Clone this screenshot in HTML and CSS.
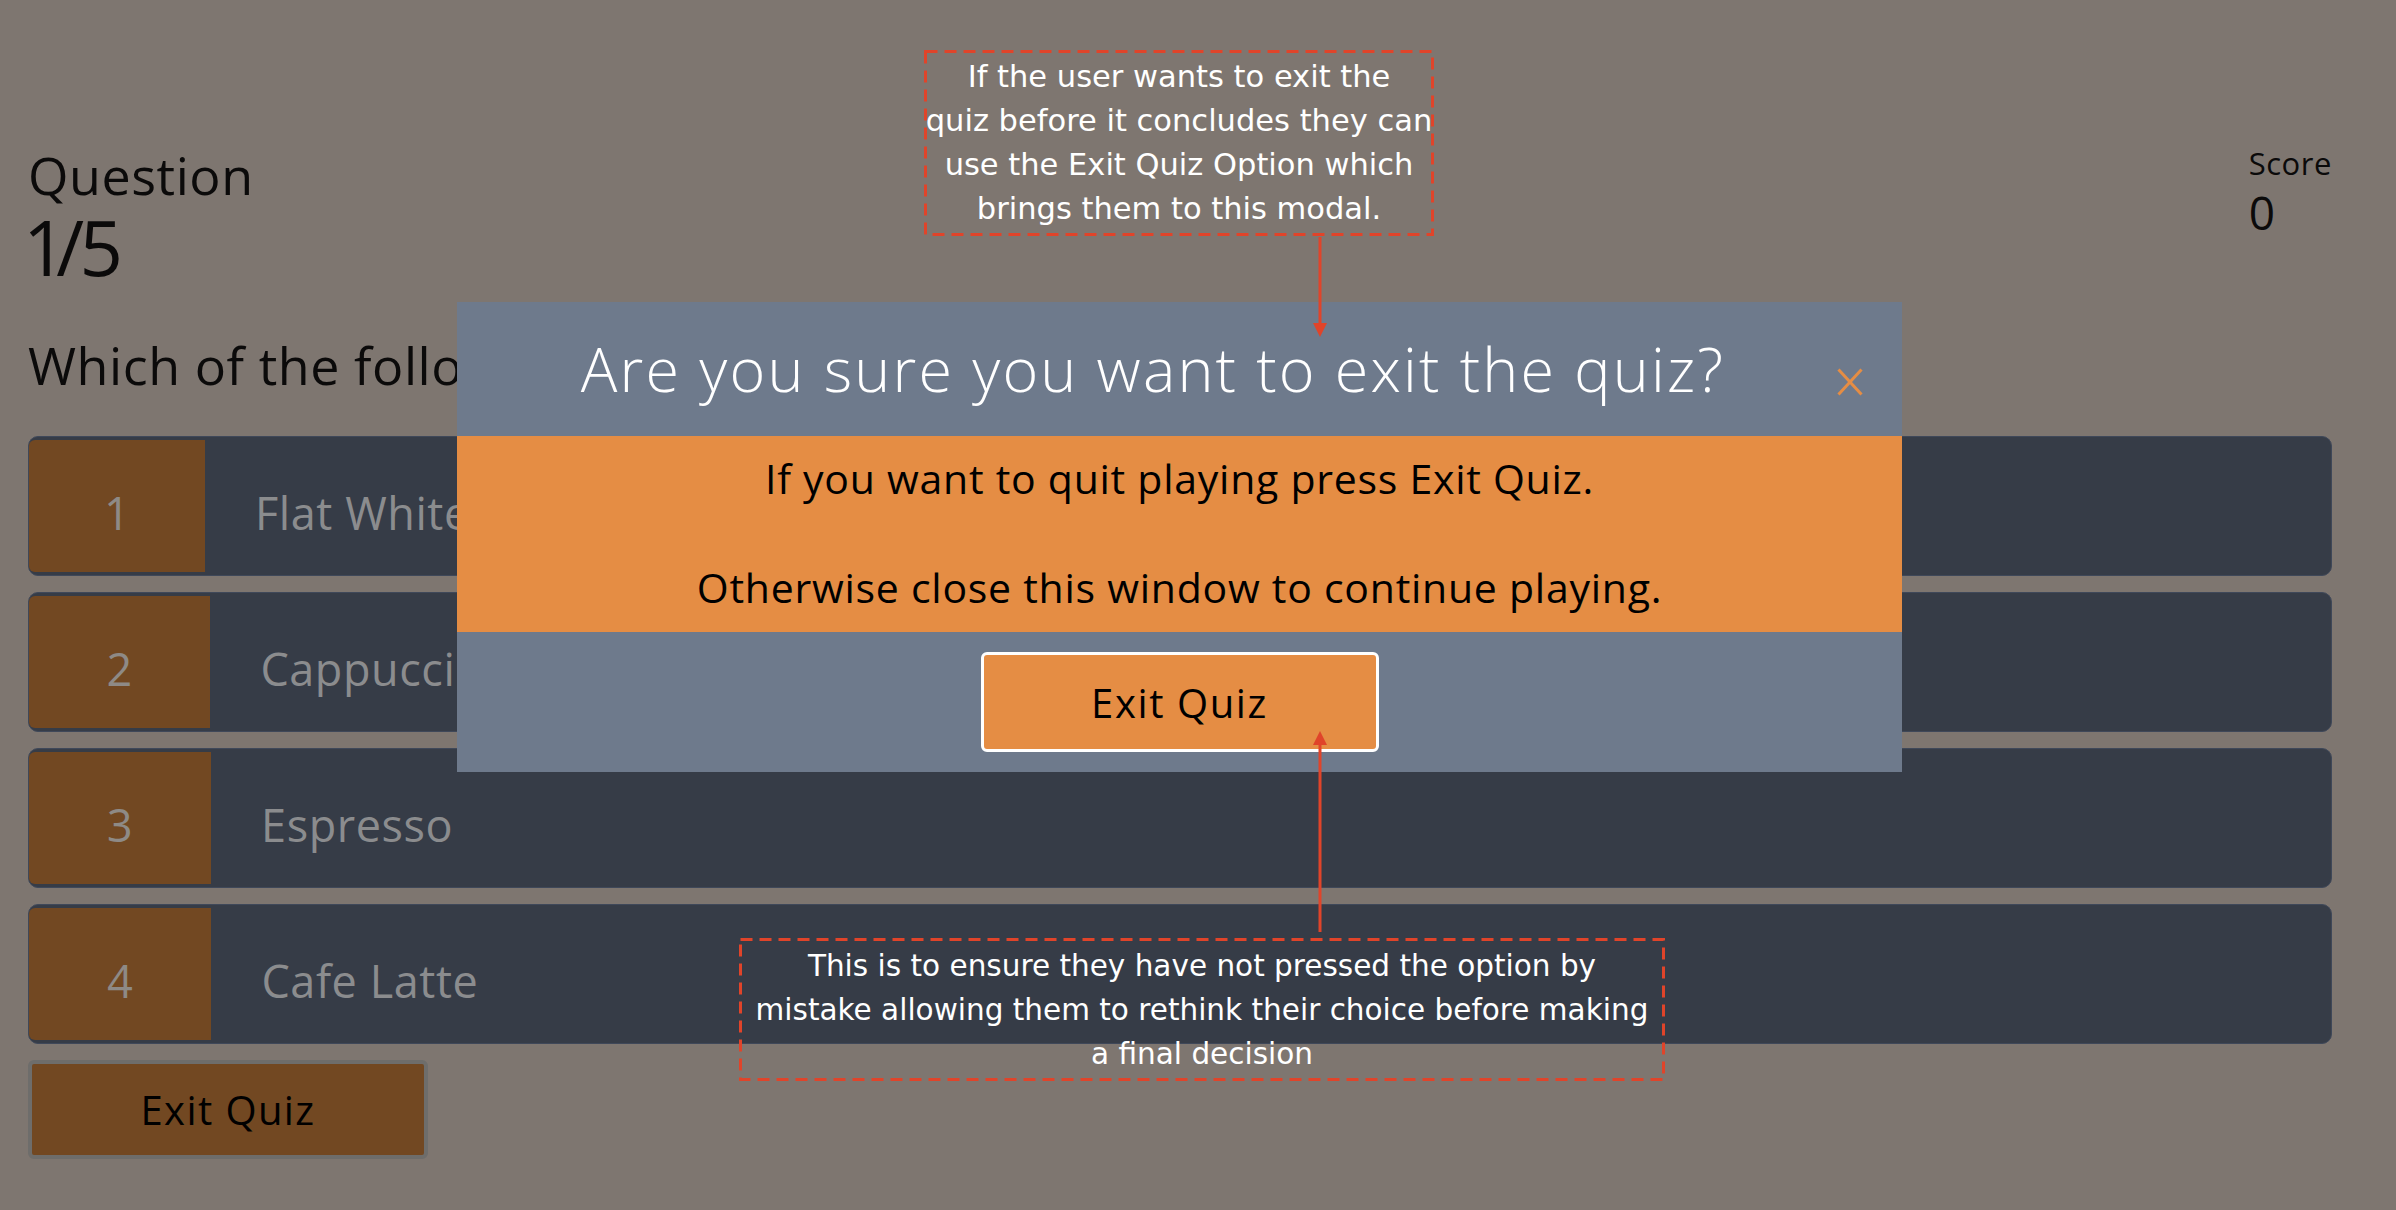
FILE: index.html
```html
<!DOCTYPE html>
<html lang="en">
<head>
<meta charset="utf-8">
<title>Coffee Quiz</title>
<link rel="stylesheet" href="styles.css">
</head>
<body>
<main class="page">
  <header class="top">
    <div class="progress">
      <div class="progress-label">Question</div>
      <div class="progress-count">1/5</div>
    </div>
    <div class="score">
      <div class="score-label">Score</div>
      <div class="score-value">0</div>
    </div>
  </header>
  <h2 class="question">Which of the following is a milk based coffee drink?</h2>
  <ul class="answers">
    <li class="answer"><span class="answer-num">1</span><span class="answer-text">Flat White</span></li>
    <li class="answer"><span class="answer-num">2</span><span class="answer-text">Cappuccino</span></li>
    <li class="answer"><span class="answer-num">3</span><span class="answer-text">Espresso</span></li>
    <li class="answer"><span class="answer-num">4</span><span class="answer-text">Cafe Latte</span></li>
  </ul>
  <button class="exit-btn">Exit Quiz</button>
</main>

<div class="modal">
  <div class="modal-header">
    <h1 class="modal-title">Are you sure you want to exit the quiz?</h1>
    <button class="modal-close" aria-label="Close">
      <svg width="26" height="28" viewBox="0 0 26 28"><path d="M1.5 1.5 L24.5 26.5 M24.5 1.5 L1.5 26.5" stroke="#e58d44" stroke-width="3" fill="none"/></svg>
    </button>
  </div>
  <div class="modal-body">
    <p>If you want to quit playing press Exit Quiz.</p>
    <p>Otherwise close this window to continue playing.</p>
  </div>
  <div class="modal-footer">
    <button class="modal-exit">Exit Quiz</button>
  </div>
</div>

<div class="note note-top">
  <svg class="dash"><rect/></svg>
  If the user wants to exit the<br>quiz before it concludes they can<br>use the Exit Quiz Option which<br>brings them to this modal.
</div>
<svg class="arrow arrow-top" width="20" height="104" viewBox="0 0 20 104">
  <line x1="10" y1="2" x2="10" y2="90" stroke="#e0442a" stroke-width="3"/>
  <polygon points="3,88 17,88 10,102" fill="#e0442a"/>
</svg>

<div class="note note-bottom">
  <svg class="dash"><rect/></svg>
  This is to ensure they have not pressed the option by<br>mistake allowing them to rethink their choice before making<br>a final decision
</div>
<svg class="arrow arrow-bottom" width="20" height="205" viewBox="0 0 20 205">
  <line x1="10" y1="14" x2="10" y2="203" stroke="#e0442a" stroke-width="3"/>
  <polygon points="10,2 3,16 17,16" fill="#e0442a"/>
</svg>
</body>
</html>
```

FILE: styles.css
```css
html, body {
  margin: 0;
  padding: 0;
}

body {
  width: 2396px;
  height: 1210px;
  overflow: hidden;
  position: relative;
  background: #7e7670;
  font-family: "Open Sans", "Liberation Sans", sans-serif;
  font-weight: 400;
  letter-spacing: 0.035em;
}

.page {
  padding: 143px 64px 0 28px;
}

.top {
  display: flex;
  justify-content: space-between;
  align-items: flex-start;
}

.progress {
  padding-top: 2px;
  color: #0b0a0a;
}

.progress-label {
  font-size: 52px;
  line-height: 60px;
}

.progress-count {
  font-size: 76px;
  line-height: 80px;
  margin-top: 2px;
  letter-spacing: -0.06em;
  font-variant-numeric: proportional-nums;
}

.score {
  color: #0b0a0a;
}

.score-label {
  font-size: 31px;
  line-height: 40px;
}

.score-value {
  font-size: 46px;
  line-height: 50px;
  margin-top: 4px;
}

.question {
  margin: 48px 0 0;
  font-size: 52px;
  line-height: 60px;
  font-weight: 400;
  color: #0b0a0a;
  white-space: nowrap;
}

.answers {
  list-style: none;
  margin: 41px 0 0;
  padding: 0;
  display: flex;
  flex-direction: column;
  gap: 16px;
}

.answer {
  display: flex;
  align-items: stretch;
  height: 140px;
  box-sizing: border-box;
  border: 1px solid #3f4859;
  border-radius: 10px;
  background: #363c47;
  padding: 3px 0;
}

.answer-num {
  display: flex;
  align-items: center;
  justify-content: center;
  padding: 12px 78px 0;
  background: #724822;
  border-radius: 6px 0 0 6px;
  color: #8e8a86;
  font-size: 45px;
  font-variant-numeric: proportional-nums;
}

.answer-text {
  display: flex;
  align-items: center;
  margin-left: 50px;
  padding-top: 12px;
  color: #8b8c8e;
  font-size: 45px;
}

.exit-btn {
  display: block;
  margin-top: 16px;
  width: 400px;
  height: 99px;
  border: 4px solid #6e6d6b;
  border-radius: 6px;
  background: #724822;
  font-family: inherit;
  font-weight: 400;
  letter-spacing: 0.035em;
  font-size: 40px;
  color: #000;
  padding: 0;
}

/* Modal */
.modal {
  position: absolute;
  left: 457px;
  top: 302px;
  width: 1445px;
}

.modal-header {
  height: 134px;
  background: #6e7a8c;
  display: flex;
  align-items: center;
}

.modal-title {
  flex: 1;
  margin: 0 -12px 0 0;
  text-align: center;
  font-size: 61px;
  line-height: 70px;
  font-weight: 300;
  letter-spacing: 0.036em;
  color: #fff;
}

.modal-close {
  width: 26px;
  height: 28px;
  margin: 25px 39px 0 0;
  padding: 0;
  border: 0;
  background: none;
  display: flex;
}

.modal-body {
  background: #e58d44;
  height: 196px;
  box-sizing: border-box;
  padding-top: 19px;
  text-align: center;
}

.modal-body p {
  margin: 0;
  font-size: 41px;
  line-height: 46px;
  letter-spacing: 0.018em;
  color: #000;
}

.modal-body p + p {
  margin-top: 63px;
}

.modal-footer {
  height: 140px;
  box-sizing: border-box;
  background: #6e7a8c;
  padding-top: 20px;
  display: flex;
  justify-content: center;
  align-items: flex-start;
}

.modal-exit {
  width: 398px;
  height: 100px;
  border: 3px solid #fff;
  border-radius: 6px;
  background: #e58d44;
  font-family: inherit;
  font-weight: 400;
  letter-spacing: 0.04em;
  font-size: 40px;
  color: #000;
  padding: 0;
}

/* Annotations */
.note {
  position: absolute;
  box-sizing: border-box;
  color: #fff;
  font-family: "DejaVu Sans", sans-serif;
  font-weight: 400;
  letter-spacing: 0;
  line-height: 44px;
  text-align: center;
  white-space: nowrap;
}

.note-top {
  left: 924px;
  top: 50px;
  width: 510px;
  height: 186px;
  padding-top: 5px;
  font-size: 30.5px;
}

.note-bottom {
  left: 739px;
  top: 938px;
  width: 926px;
  height: 143px;
  padding-top: 6px;
  font-size: 29.5px;
}

.dash {
  position: absolute;
  left: 0;
  top: 0;
  width: 100%;
  height: 100%;
  overflow: visible;
}

.dash rect {
  x: 1.5px;
  y: 1.5px;
  width: calc(100% - 3px);
  height: calc(100% - 3px);
  fill: none;
  stroke: #e0442a;
  stroke-width: 3;
  stroke-dasharray: 12 7;
}

.arrow {
  position: absolute;
  left: 1310px;
}

.arrow-top {
  top: 235px;
}

.arrow-bottom {
  top: 729px;
}
```
